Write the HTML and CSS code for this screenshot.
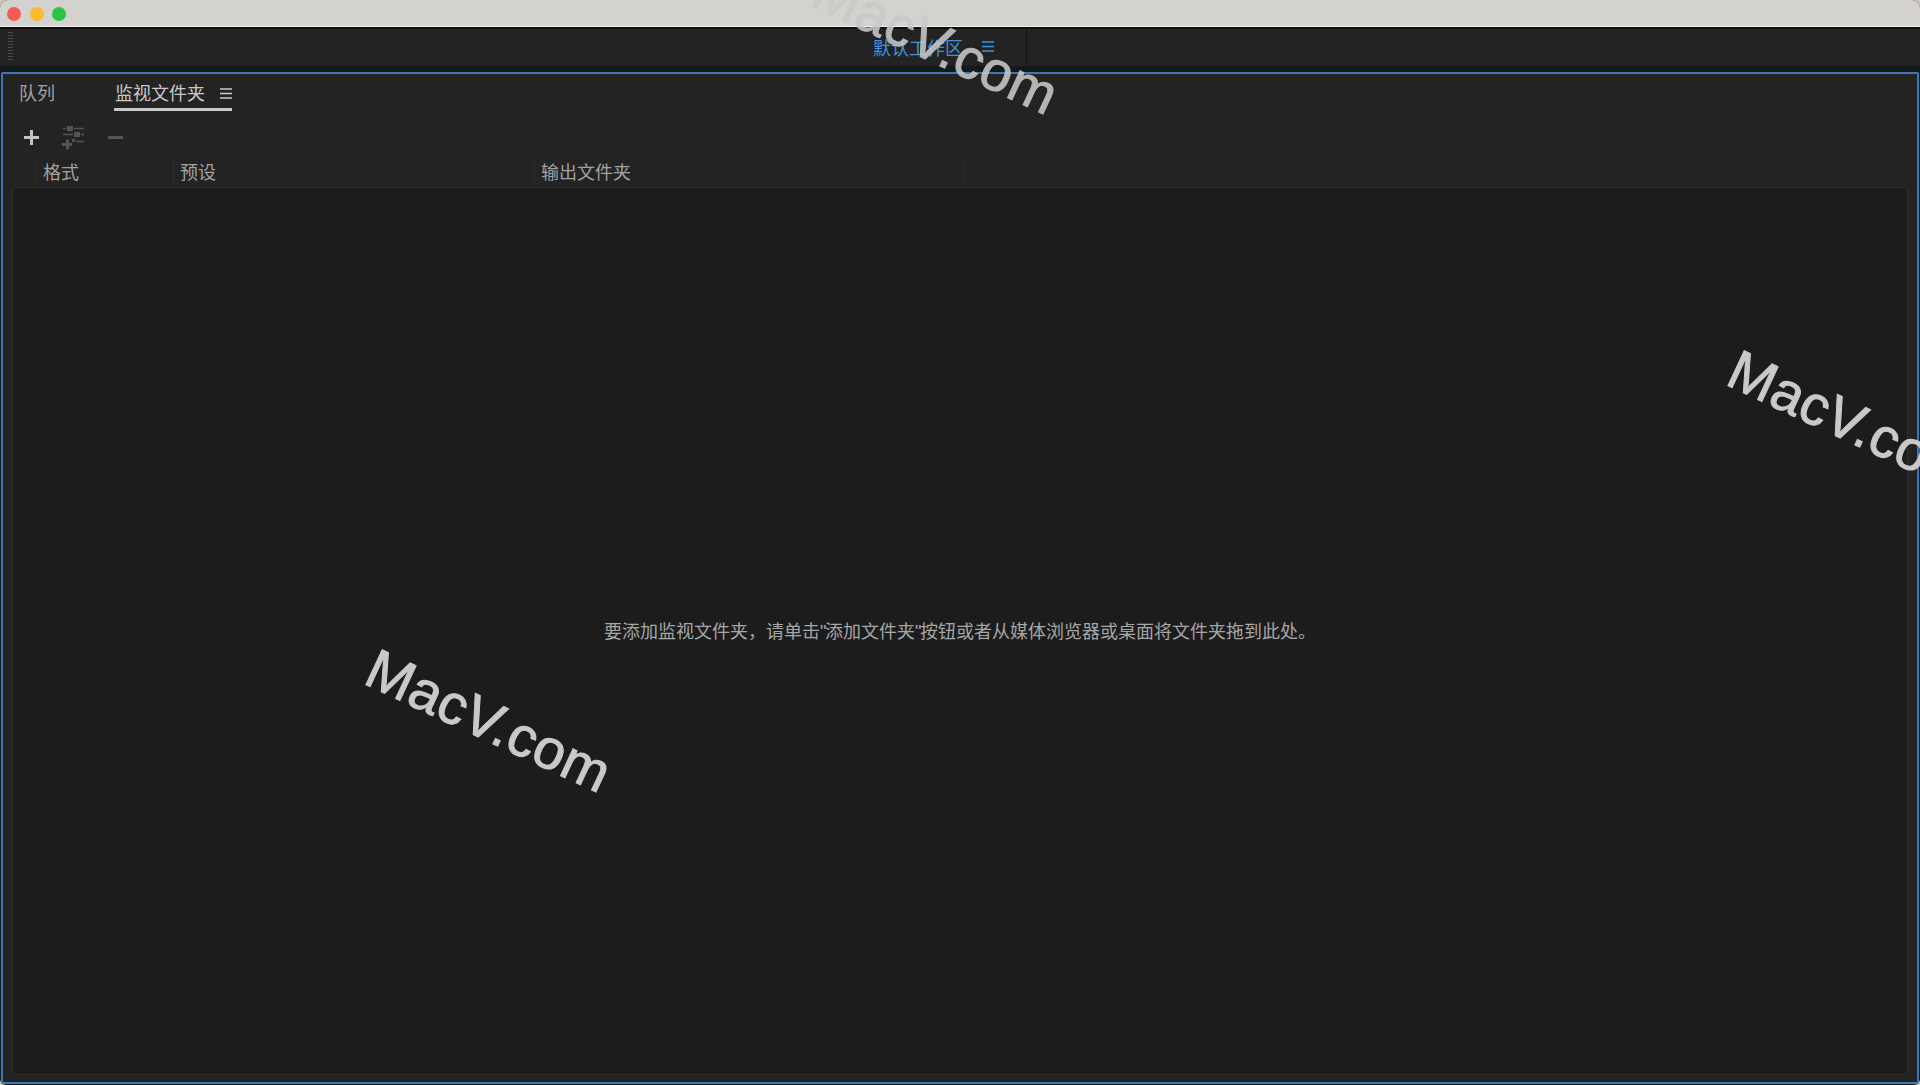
FILE: index.html

```html
<!DOCTYPE html>
<html lang="zh-CN">
<head>
  <meta charset="UTF-8" />
  <title>监视文件夹</title>
  <link rel="stylesheet" href="styles.css">
</head>
<body>
  <div class="window">
    <div class="titlebar">
      <span class="light red"></span>
      <span class="light yellow"></span>
      <span class="light green"></span>
    </div>
    <div class="workspace-bar">
      <div class="gripper"></div>
      <div class="workspace">
        <span class="workspace-name">默认工作区</span>
        <svg class="menu-icon" viewBox="0 0 12 11"><path d="M0 1h12M0 5.500h12M0 10h12" /></svg>
      </div>
    </div>
    <div class="panel">
      <div class="tabs">
        <div class="tab">队列</div>
        <div class="tab active">
          监视文件夹
          <svg class="menu-icon" viewBox="0 0 12 11"><path d="M0 1h12M0 5.500h12M0 10h12" /></svg>
        </div>
      </div>
      <div class="toolbar">
        <svg class="tool plus" viewBox="0 0 15 15"><path d="M7.500 0v15M0 7.500h15" /></svg>
        <svg class="tool settings" viewBox="0 0 24 24">
          <rect x="5" y="0" width="6" height="5" />
          <rect x="12" y="6" width="6" height="5" />
          <path class="thin" d="M1 2.500h3M12 2.500h10M1 8.500h10M19 8.500h3M14 15.500h8" />
          <rect x="10" y="13" width="3" height="3" />
          <path class="cross" d="M5.500 13.500v10M0 18.500h10" />
        </svg>
        <svg class="tool minus" viewBox="0 0 15 15"><path d="M0 7.500h15" /></svg>
      </div>
      <div class="columns">
        <div class="col col-format">格式</div>
        <div class="col col-preset">预设</div>
        <div class="col col-output">输出文件夹</div>
        <div class="col col-rest"></div>
      </div>
      <div class="list">
        <p class="empty">要添加监视文件夹&#65292;请单击<span class="quote">"</span>添加文件夹<span class="quote">"</span>按钮或者从媒体浏览器或桌面将文件夹拖到此处。</p>
      </div>
    </div>
  </div>

  <div class="watermark wm-top">MacV.com</div>
  <div class="watermark wm-right">MacV.com</div>
  <div class="watermark wm-bottom">MacV.com</div>
</body>
</html>
```

FILE: styles.css

```css
html, body { margin: 0; height: 100%; background: #d9c9b0; overflow: hidden; }
body { font-family: "Liberation Sans", "Noto Sans CJK SC", sans-serif; }
.window { display: flex; flex-direction: column; height: 1085px; border-radius: 8px 8px 6px 6px; overflow: hidden; background: #161819; }

.titlebar { flex: 0 0 27px; display: flex; align-items: center; gap: 8.500px; padding-left: 7px; background: #d3d2cf; border-bottom: 2px solid #101010; box-shadow: inset 0 -1px 0 #efefed; }
.light { width: 14px; height: 14px; border-radius: 50%; }
.red { background: #f25c56; }
.yellow { background: #fabb2e; }
.green { background: #2cc541; }

.workspace-bar { flex: 0 0 37px; display: flex; background: #232323; }
.gripper { width: 5px; height: 30px; margin: 3px 0 0 8px; background: repeating-linear-gradient(#4a4a4a 0 1px, transparent 1px 3px); }
.workspace { width: 154px; margin-left: 860px; box-sizing: border-box; display: flex; align-items: center; gap: 19px; padding-bottom: 2px; border-right: 1px solid #111; color: #3f93dc; font-size: 18px; }
.workspace-name { white-space: nowrap; }
.menu-icon { width: 12px; height: 11px; fill: none; stroke-width: 1.500; }
.workspace .menu-icon { stroke: #3f93dc; }

.panel { flex: 1; margin: 6px 1px 1px 1px; display: flex; flex-direction: column; border: 2px solid #3c78b5; border-radius: 2px; background: #232323; min-height: 0; }

.tabs { flex: 0 0 37px; display: flex; align-items: flex-end; padding-left: 16px; gap: 60px; }
.tab { height: 33px; box-sizing: border-box; padding-bottom: 6px; display: flex; align-items: center; font-size: 18px; color: #a2a2a2; white-space: nowrap; }
.tab.active { width: 118px; margin-left: -1px; padding: 0 0 2px 1px; gap: 15px; color: #c9c9c9; border-bottom: 3px solid #c9c9c9; }
.tab .menu-icon { margin-top: 3px; stroke: #c9c9c9; }

.toolbar { flex: 0 0 49px; box-sizing: border-box; padding: 4px 0 0 21px; display: flex; align-items: center; }
.tool { display: block; }
.plus { width: 15px; height: 15px; fill: none; stroke: #c4c4c4; stroke-width: 3; }
.settings { width: 24px; height: 24px; margin-left: 23px; fill: #555; stroke: none; }
.settings .thin { fill: none; stroke: #555; stroke-width: 1.500; }
.settings .cross { fill: none; stroke: #555; stroke-width: 3; }
.minus { width: 15px; height: 15px; margin-left: 22px; fill: none; stroke: #555; stroke-width: 3; }

.columns { flex: 0 0 26px; display: flex; align-items: center; padding-left: 33px; font-size: 18px; color: #a2a2a2; }
.col { height: 24px; box-sizing: border-box; padding-left: 6px; line-height: 24px; border-left: 1px solid #2c2c2c; white-space: nowrap; }
.col-format { width: 137px; }
.col-preset { width: 361px; }
.col-output { width: 429px; }
.col-rest { flex: 1; }

.list { flex: 1; margin: 1px 9px 7px 9px; padding-bottom: 3px; display: flex; align-items: center; justify-content: center; border: 1px solid #2e2e2e; border-radius: 2px; background: #1c1c1c; }
.empty { margin: 0; font-size: 18px; color: #a6a6a6; white-space: nowrap; }
.quote { letter-spacing: -1.500px; }

.watermark { position: absolute; font-size: 56px; line-height: 1; letter-spacing: .4px; white-space: nowrap; color: #c9c9c9; -webkit-text-stroke: 1px #c9c9c9; transform-origin: 0 100%; transform: rotate(25deg); }
.wm-top { left: 805px; top: -43px; opacity: .88; }
.wm-right { left: 1720px; top: 336px; }
.wm-bottom { left: 358px; top: 635px; }
```
